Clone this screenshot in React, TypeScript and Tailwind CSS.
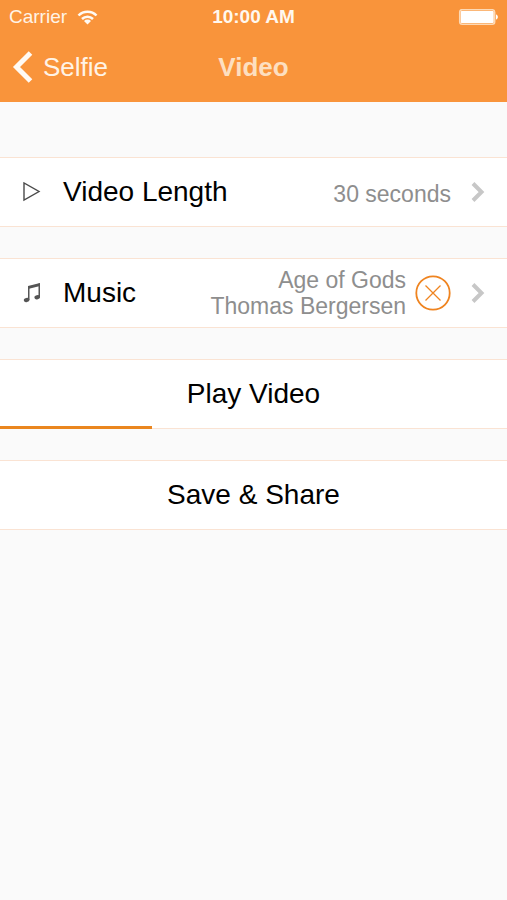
import type { ReactNode } from "react"

const song = { title: "Age of Gods", artist: "Thomas Bergersen" }
const progress = 30

const Chevron = () => (
    <svg width="14" height="20" viewBox="0 0 14 20" fill="none" stroke="#c7c7c7" strokeWidth="4" aria-hidden="true">
        <path d="M2 1.5 10.5 10 2 18.5" />
    </svg>
)

const Row = ({ children }: { children: ReactNode }) => (
    <section className="relative flex h-[70px] items-center border-y border-[#fae3d3] bg-white">
        {children}
    </section>
)

const StatusBar = () => (
    <div className="grid h-[34px] grid-cols-3 items-center px-[9px]">
        <div className="flex items-center gap-[10px] text-[19px] leading-6 text-[#fff3e6]">
            <span>Carrier</span>
            <svg width="21" height="15" viewBox="0 0 21 15" aria-hidden="true">
                <g fill="none" stroke="#fffaf4" strokeWidth="2.5">
                    <path d="M1.5 5.5a12.5 12.5 0 0 1 18 0" />
                    <path d="M5 9a7.8 7.8 0 0 1 11 0" />
                </g>
                <path d="M7 11a5 5 0 0 1 7 0l-3.5 3.5z" fill="#fffaf4" />
            </svg>
        </div>
        <span className="text-center text-[19px] leading-6 font-bold text-[#fff8ef]">10:00 AM</span>
        <svg className="justify-self-end" width="40" height="16" viewBox="0 0 40 16" aria-hidden="true">
            <rect x="1.7" y="0.7" width="35" height="14.5" rx="2.5" fill="none" stroke="#fdd9b5" strokeWidth="1.5" />
            <rect x="2.7" y="2" width="33" height="12" rx="1" fill="#fff" />
            <path d="M38 5.500c2.500.5 2.500 4.500 0 5z" fill="#fff" />
        </svg>
    </div>
)

const Header = () => (
    <header className="bg-[#f9943b] pb-[2px]">
        <StatusBar />
        <nav className="grid h-[66px] grid-cols-3 items-center px-3">
            <a href="#selfie" className="flex items-center gap-[10px] text-[26px] leading-8 text-[#fff3e6]">
                <svg width="21" height="32" viewBox="0 0 21 32" fill="none" stroke="#fffaf4" strokeWidth="5" aria-hidden="true">
                    <path d="M18.5 2 4.5 16l14 14" />
                </svg>
                Selfie
            </a>
            <h1 className="text-center text-[26px] leading-8 font-bold text-[#fddfc0]">Video</h1>
        </nav>
    </header>
)

export default function App() {
    return (
        <div className="min-h-screen bg-[#fafafa] font-['Liberation_Sans',Arial,sans-serif] text-black">
            <Header />
            <main className="flex flex-col gap-[31px] pt-[55px]">
                <Row>
                    <a href="#length" className="flex h-full flex-1 items-center pr-[22px] pl-[22px]">
                        <svg width="20" height="20" viewBox="0 0 20 20" fill="none" stroke="#4a4a4a" strokeWidth="1.4" aria-hidden="true">
                            <path d="M2 1v17L17 9.500z" />
                        </svg>
                        <span className="ml-[21px] text-[28px] leading-9">Video Length</span>
                        <span className="ml-auto pt-1 text-[23px] leading-[26px] text-[#8e8e8e]">30 seconds</span>
                        <span className="ml-5">
                            <Chevron />
                        </span>
                    </a>
                </Row>
                <Row>
                    <a href="#music" className="flex h-full flex-1 items-center pl-[22px]">
                        <svg width="20" height="20" viewBox="0 0 20 20" fill="#555" aria-hidden="true">
                            <path d="M6 3 18 0v3L6 6z" />
                            <path d="M6 3h1.500v14H6zM16.500 0.400H18v14h-1.500z" />
                            <ellipse cx="4.600" cy="17" rx="2.800" ry="2.100" transform="rotate(-15 4.600 17)" />
                            <ellipse cx="15.200" cy="14.200" rx="2.800" ry="2.100" transform="rotate(-15 15.200 14.200)" />
                        </svg>
                        <span className="ml-[21px] text-[28px] leading-9">Music</span>
                        <span className="ml-auto text-right text-[23px] leading-[26px] text-[#8e8e8e]">
                            {song.title}
                            <br />
                            {song.artist}
                        </span>
                    </a>
                    <button type="button" aria-label="Remove music" className="ml-[9px] cursor-pointer">
                        <svg width="36" height="36" viewBox="0 0 36 36" fill="none" stroke="#ef8420" aria-hidden="true">
                            <circle cx="18" cy="18" r="16.700" strokeWidth="1.800" />
                            <path d="m10.500 10.500 15 15m0-15-15 15" strokeWidth="1.300" />
                        </svg>
                    </button>
                    <a href="#music" aria-label="Choose music" className="flex h-full items-center pr-[22px] pl-5">
                        <Chevron />
                    </a>
                </Row>
                <Row>
                    <button type="button" className="h-full flex-1 cursor-pointer text-[28px] leading-9">
                        Play Video
                    </button>
                    <div
                        role="progressbar"
                        aria-label="Playback"
                        aria-valuenow={progress}
                        className="absolute -bottom-px left-0 h-[3px] bg-[#ea861f]"
                        style={{ width: `${progress}%` }}
                    />
                </Row>
                <Row>
                    <button type="button" className="h-full flex-1 cursor-pointer text-[28px] leading-9">
                        Save &amp; Share
                    </button>
                </Row>
            </main>
        </div>
    )
}
